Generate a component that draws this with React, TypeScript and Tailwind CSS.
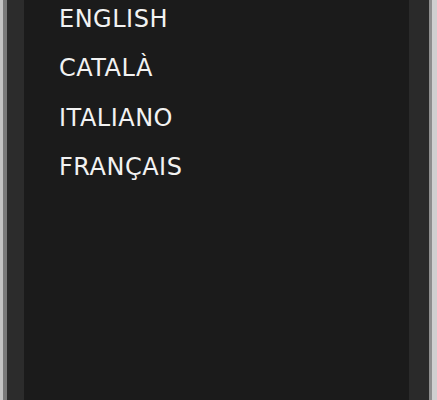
const languages = ["ENGLISH", "CATALÀ", "ITALIANO", "FRANÇAIS"];

export default function App() {
  return (
    <div className="flex h-[400px] w-[437px] overflow-hidden bg-[#1b1b1b]">
      {/* left frame */}
      <div className="w-[3px] bg-[#c4c4c4]" />
      <div className="w-[4px] bg-[#7a7a7a]" />
      <div className="w-[17px] bg-[#2c2c2c]" />

      {/* menu list */}
      <ul className="flex-1 bg-[#1b1b1b] pl-[35px] pt-[5px] font-['DejaVu_Sans',sans-serif] text-[24px] leading-[28px] tracking-[0.5px] text-[#f2f2f2]">
        {languages.map((l) => (
          <li key={l} className="h-[49.3px]">
            {l}
          </li>
        ))}
      </ul>

      {/* right frame */}
      <div className="w-[20px] bg-[#2a2a2a]" />
      <div className="w-[3px] bg-[#8e8e8e]" />
      <div className="w-[5px] bg-[#d0d0d0]" />
    </div>
  );
}
